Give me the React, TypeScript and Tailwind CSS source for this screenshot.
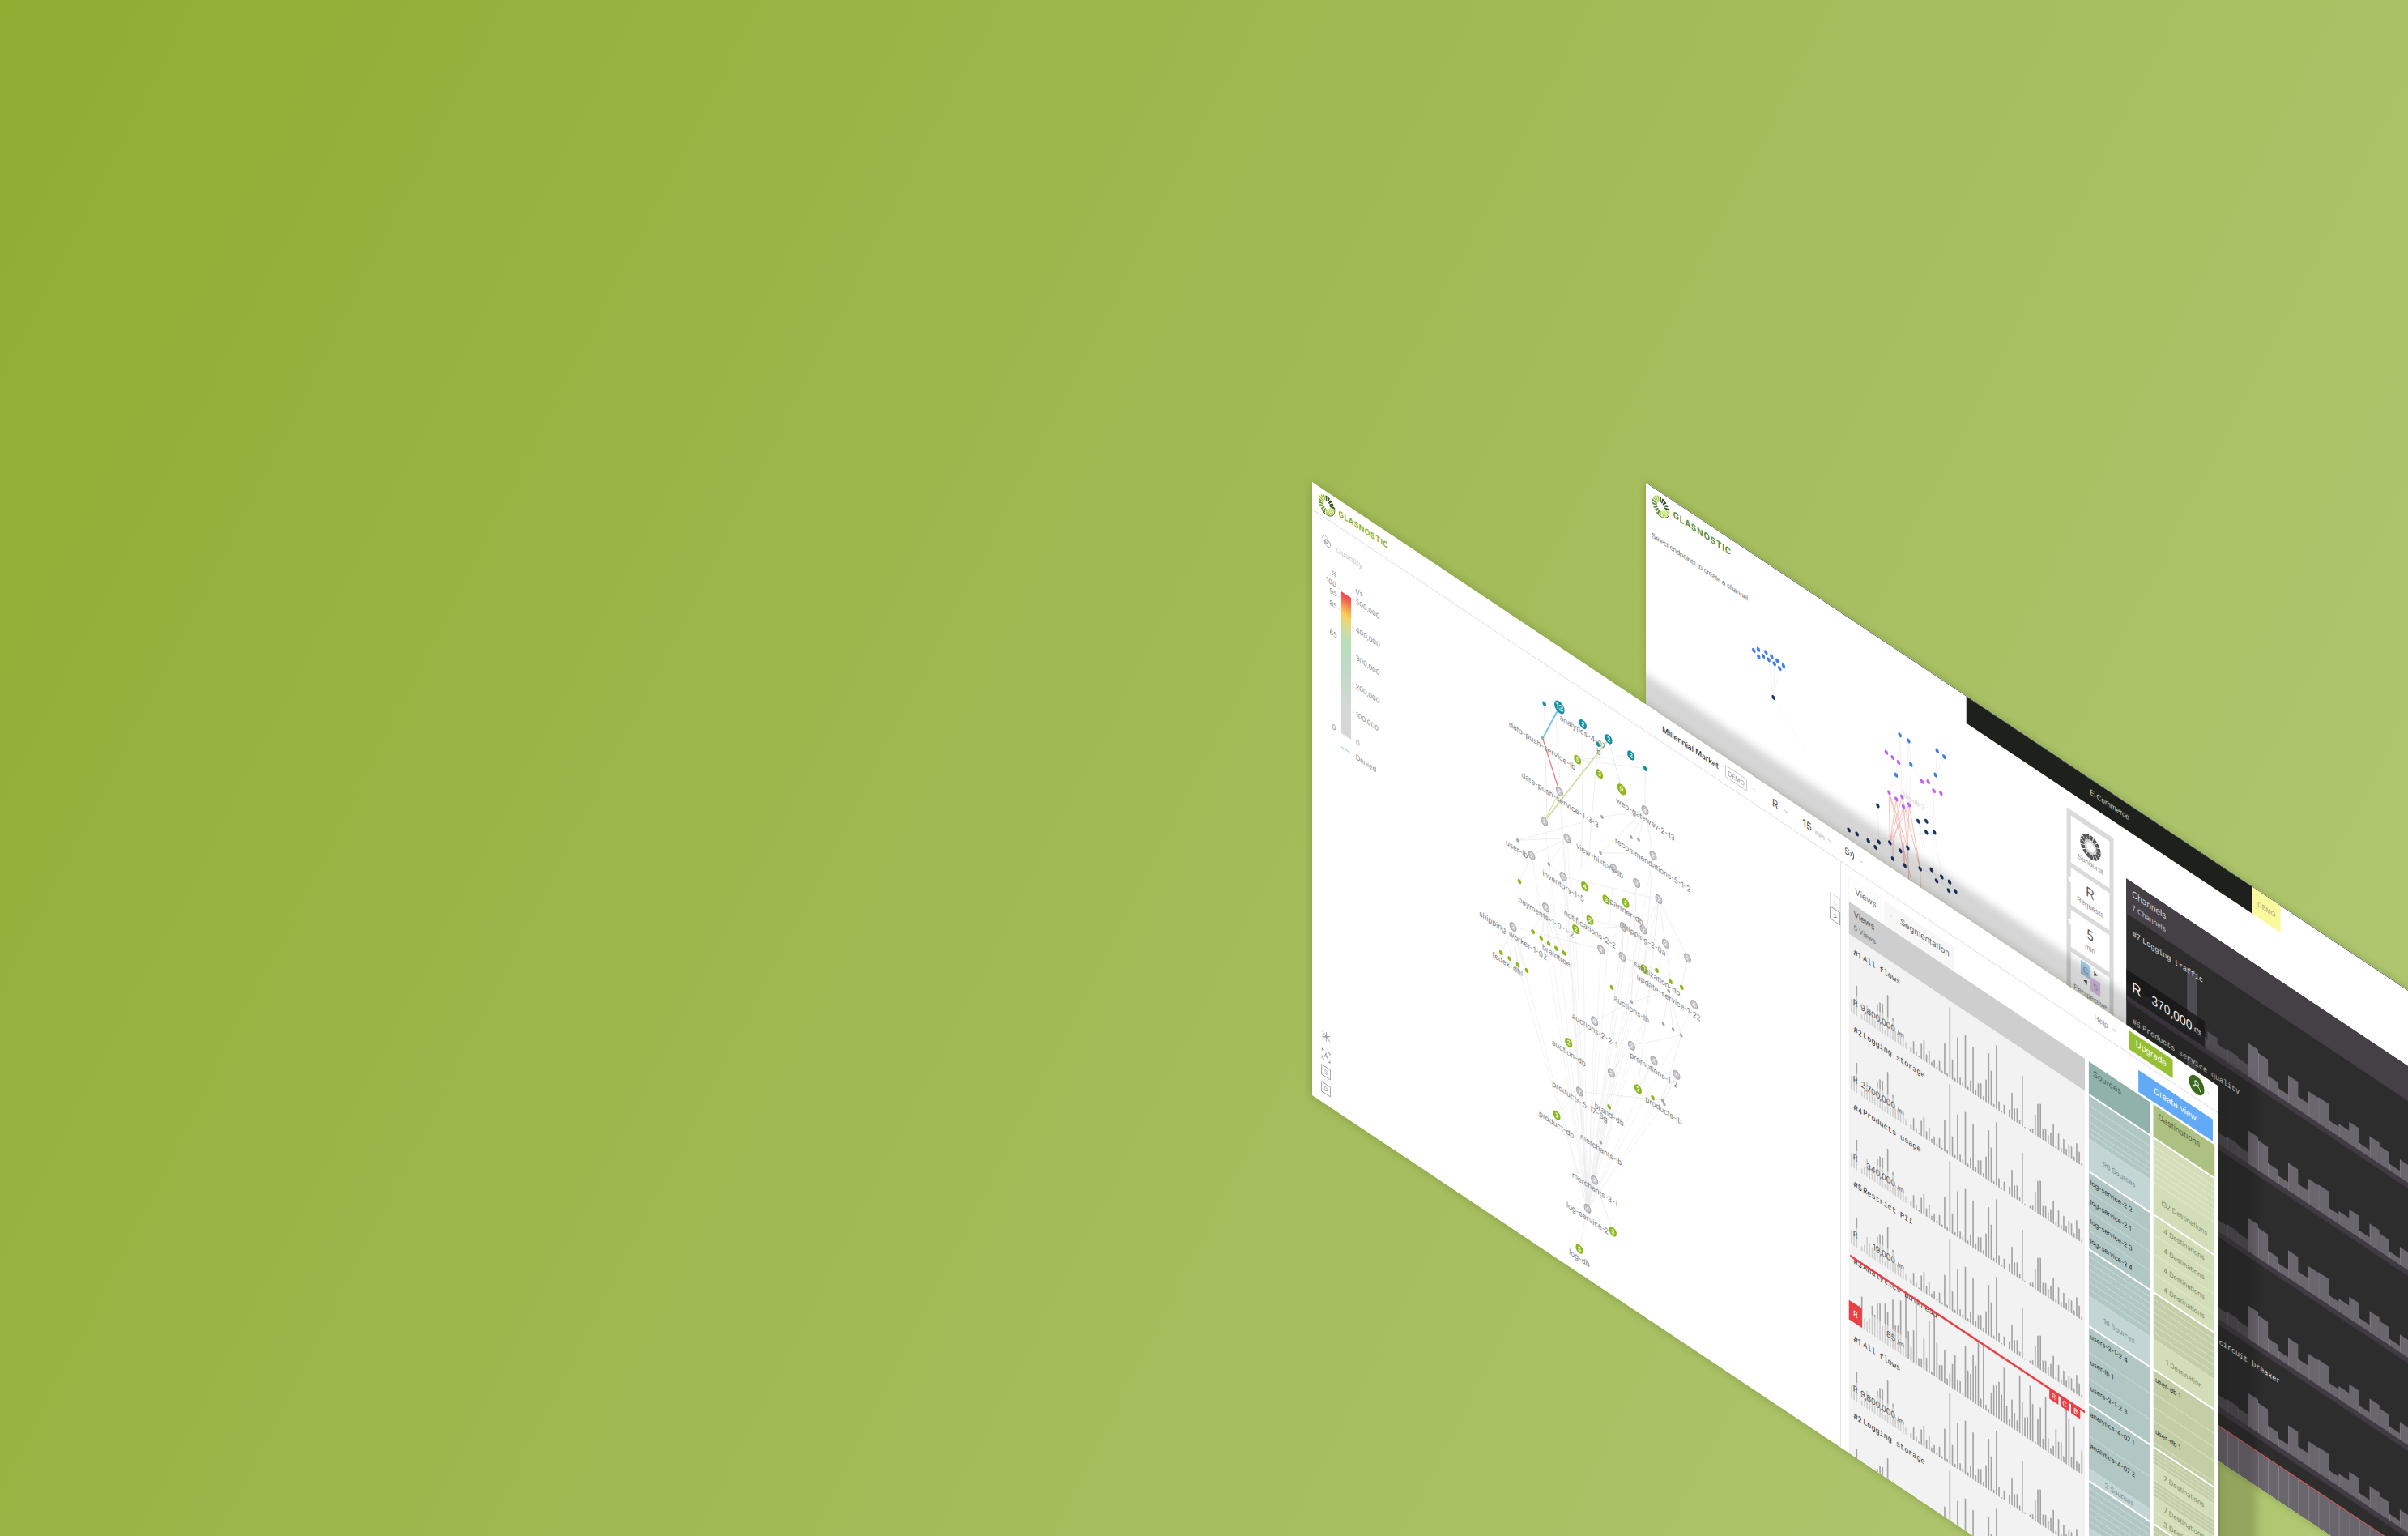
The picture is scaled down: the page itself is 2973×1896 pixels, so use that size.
import React from "react";

const SANS = "font-['Inter',sans-serif]";
const HELV = "font-['Liberation_Sans',sans-serif]";
const MONO = "font-['Liberation_Mono',monospace]";

const SX = 0.866;
const K = 0.6662;

/* Node positions are stored on the isometric drawing grid and projected onto the flat panel. */
const flat = (dx: number, dy: number): [number, number] => [dx / SX, dy - K * dx];
const front = (x: number, y: number) => flat(x / 3 + 180, y / 3 + 245);
const back = (x: number, y: number) => flat(x / 3 - 12, y / 3 + 205);

function Logo({ size, dark = false }: { size: number; dark?: boolean }) {
  const greens = dark
    ? ["#2f4a22", "#9cc53c", "#5f8f3a", "#b9dd55"]
    : ["#34501c", "#9cc832", "#6f9d2c", "#b5da45"];
  return (
    <svg width={size} height={size} viewBox="-12 -12 24 24" className="shrink-0">
      {Array.from({ length: 18 }, (_, i) => (
        <path
          key={i}
          d="M-0.7,-4.8 L-1.5,-10.6 L0.9,-11.2 L0.4,-4.6 Z"
          fill={greens[(i * 3 + (i % 5)) % 4]}
          transform={`rotate(${i * 20})`}
        />
      ))}
      <path d="M11,-3 A11.3,11.3 0 0 1 -6,9.6" fill="none" stroke={greens[0]} strokeWidth="0.8" />
    </svg>
  );
}

function Chevron() {
  return (
    <svg width="6" height="4" viewBox="0 0 6 4" className="shrink-0">
      <path d="M0.5,0.8 L3,3 L5.5,0.8" fill="none" stroke="#b5b5b5" strokeWidth="0.7" />
    </svg>
  );
}

/* ---------- service graph ---------- */

const TEAL = "#14919f";
const LIME = "#8cb81c";
const GRAY = "#a6a6aa";

const numbered: [number, number, string, string, number][] = [
  [376, 99, "13", TEAL, 7.3], [463, 162, "2", TEAL, 5.3], [558, 217, "2", TEAL, 5.3], [641, 277, "2", TEAL, 5.3],
  [443, 293, "5", LIME, 5.2], [524, 346, "3", LIME, 5.2], [606, 403, "9", LIME, 6.2], [470, 762, "4", LIME, 5.3],
  [549, 811, "3", LIME, 5.2], [621, 824, "2", LIME, 5.2], [489, 887, "2", LIME, 5.2], [437, 921, "2", LIME, 5.2],
  [690, 1069, "3", LIME, 5.2], [410, 1341, "2", LIME, 5.3], [667, 1513, "2", LIME, 5.3], [366, 1610, "3", LIME, 5.3],
  [574, 2041, "3", LIME, 5.3], [450, 2105, "5", LIME, 5.3],
];
const ringed: [number, number, string][] = [
  [376, 411, "2"], [320, 521, "2"], [405, 584, "2"], [273, 648, "2"], [693, 480, "4"], [723, 648, "2"],
  [390, 726, "2"], [578, 695, "2"], [662, 750, "3"], [744, 810, "2"], [326, 840, "2"], [204, 912, "2"],
  [613, 912, "5"], [687, 922, "2"], [769, 974, "2"], [530, 996, "2"], [609, 1023, "3"], [850, 1027, "2"],
  [875, 1200, "6"], [506, 1261, "6"], [643, 1352, "2"], [726, 1407, "4"], [810, 1460, "4"], [568, 1453, "2"],
  [451, 1522, "7"], [506, 1850, "2"], [480, 1955, "4"],
];
const smallGray: [number, number][] = [
  [314, 214], [534, 505], [222, 592], [642, 580], [669, 589], [528, 638], [337, 680], [781, 1150], [643, 1190],
  [761, 1272], [797, 1292], [827, 1314], [758, 1555], [764, 1568], [529, 1710],
];
const smallLime: [number, number][] = [
  [228, 744], [278, 930], [308, 953], [336, 974], [364, 992], [393, 1009], [160, 1008], [191, 1030], [222, 1053],
  [255, 1074], [737, 1073], [788, 1115], [829, 1136], [570, 1137], [722, 1545], [560, 1579],
];
const smallTeal: [number, number][] = [[320, 86], [519, 236], [694, 326]];
const names: [number, number, string][] = [
  [462, 192, "analytics-4-07"], [519, 263, "lb"], [312, 242, "data-push-service-lb"],
  [378, 443, "data-push-service-1-3-3"], [694, 514, "web-gateway-2-13"], [722, 684, "recommendations-5-1-2"],
  [218, 625, "user-lb"], [525, 668, "view-history-lb"], [390, 762, "inventory-1-5"], [326, 877, "payments-1-0-1-2"],
  [489, 922, "notifications-2-2"], [624, 857, "partner-db"], [204, 945, "shipping-worker-1-02"],
  [687, 958, "shipping-2-0a"], [160, 1035, "fedex"], [222, 1075, "dhl"], [364, 1020, "braintree"],
  [737, 1103, "sanitization-db"], [781, 1175, "update-service-1-22"], [643, 1218, "auctions-lb"],
  [507, 1297, "auctions-2-2-1"], [410, 1380, "auction-db"], [725, 1443, "promotions-1-2"],
  [451, 1560, "products-5-17-8g"], [560, 1607, "brand-db"], [762, 1593, "products-lb"], [365, 1645, "product-db"],
  [530, 1738, "merchants-lb"], [507, 1885, "merchants-3-1"], [480, 1992, "log-service-2"], [450, 2140, "log-db"],
];
const edges: [number, number, number, number][] = [
  [693, 480, 534, 505], [693, 480, 642, 580], [693, 480, 669, 589], [693, 480, 723, 648], [693, 480, 528, 638],
  [405, 584, 222, 592], [405, 584, 273, 648], [405, 584, 337, 680], [534, 505, 222, 592], [273, 648, 228, 744],
  [337, 680, 390, 726], [390, 726, 744, 810], [443, 293, 641, 277], [443, 293, 694, 326], [694, 326, 693, 480],
  [326, 840, 278, 930], [326, 840, 308, 953], [326, 840, 336, 974], [326, 840, 364, 992], [326, 840, 393, 1009],
  [204, 912, 160, 1008], [204, 912, 191, 1030], [204, 912, 222, 1053], [204, 912, 255, 1074], [204, 912, 530, 996],
  [489, 887, 613, 912], [437, 921, 613, 912], [613, 912, 530, 996], [613, 912, 609, 1023], [744, 810, 687, 922],
  [744, 810, 769, 974], [744, 810, 850, 1027], [850, 1027, 829, 1136], [769, 974, 788, 1115], [609, 1023, 690, 1069],
  [609, 1023, 737, 1073], [643, 1190, 781, 1150], [643, 1190, 506, 1261], [506, 1261, 410, 1341],
  [827, 1314, 643, 1352], [781, 1150, 761, 1272], [781, 1150, 797, 1292], [781, 1150, 827, 1314],
  [827, 1314, 758, 1555], [451, 1522, 758, 1555], [451, 1522, 366, 1610], [643, 1352, 568, 1453],
  [662, 750, 643, 1190], [528, 638, 578, 695], [528, 638, 662, 640], [463, 162, 458, 700], [519, 236, 480, 700],
  [506, 1850, 574, 2041], [480, 1955, 450, 2105], [726, 1407, 667, 1513], [810, 1460, 764, 1555],
  [723, 648, 690, 1069], [744, 810, 667, 1513], [529, 1710, 506, 1850], [320, 86, 330, 520],
];
const toLog: [number, number][] = [
  [320, 521], [376, 411], [390, 726], [326, 840], [204, 912], [273, 648], [405, 584], [530, 996], [609, 1023],
  [613, 912], [643, 1190], [578, 695], [723, 648], [744, 810], [769, 974], [687, 922], [568, 1453], [643, 1352],
  [726, 1407], [810, 1460], [764, 1568], [875, 1200], [506, 1261], [451, 1522], [662, 750], [436, 921], [360, 99],
  [460, 740], [222, 1053],
];

function Edge({ e, color, w = 0.6 }: { e: [number, number, number, number]; color: string; w?: number }) {
  const [x1, y1] = front(e[0], e[1]);
  const [x2, y2] = front(e[2], e[3]);
  return <line x1={x1} y1={y1} x2={x2} y2={y2} stroke={color} strokeWidth={w} />;
}

function ServiceGraph() {
  const small = (list: [number, number][], color: string, r: number) =>
    list.map(([x, y], i) => {
      const [u, v] = front(x, y);
      return <circle key={color + i} cx={u} cy={v} r={r} fill={color} />;
    });
  const left: [string, number, number][] = [
    ["%", 31, 95], ["100", 27, 108], ["95", 30, 119], ["85", 30, 134], ["65", 30, 170], ["0", 31, 285],
  ];
  return (
    <svg width="753" height="723" viewBox="0 34 753 723" className={SANS}>
      <defs>
        <linearGradient id="scale" x1="0" y1="0" x2="0" y2="1">
          <stop offset="0" stopColor="#f2444a" />
          <stop offset="0.04" stopColor="#f4605a" />
          <stop offset="0.09" stopColor="#f79a50" />
          <stop offset="0.15" stopColor="#fbd05a" />
          <stop offset="0.22" stopColor="#d9dc8c" />
          <stop offset="0.32" stopColor="#b9dfba" />
          <stop offset="0.5" stopColor="#bddac4" />
          <stop offset="0.78" stopColor="#d2d8d4" />
          <stop offset="1" stopColor="#d6d6d6" />
        </linearGradient>
      </defs>

      <g stroke="#888" strokeWidth="0.8" fill="none">
        <circle cx="19" cy="60" r="4.2" strokeDasharray="2 1.1" />
        <circle cx="22" cy="63" r="4.2" strokeDasharray="2 1.1" />
        <circle cx="20.5" cy="61.5" r="1.8" />
      </g>
      <text x="34.5" y="66" fontSize="9.3" fill="#c4c4c4">Quantity</text>

      <rect x="41.5" y="111" width="14" height="175" fill="url(#scale)" />
      {left.map(([t, u, v]) => (
        <text key={t + v} x={u} y={v + 3} textAnchor="middle" fontSize="8.6" fill="#8a8a8a">{t}</text>
      ))}
      {[108, 119, 134, 170, 285].map((v) => (
        <line key={v} x1="37" x2="40" y1={v + 1} y2={v + 1} stroke="#ccc" strokeWidth="0.6" />
      ))}
      <text x="67" y="100.5" textAnchor="middle" fontSize="8.6" fill="#8a8a8a">r/s</text>
      {["500,000", "400,000", "300,000", "200,000", "100,000"].map((t, i) => (
        <g key={t}>
          <text x="62" y={114 + i * 34.8} fontSize="8.6" fill="#8a8a8a">{t}</text>
          <line x1="57" x2="60" y1={111 + i * 34.8} y2={111 + i * 34.8} stroke="#ccc" strokeWidth="0.6" />
        </g>
      ))}
      <text x="62.5" y="287.5" fontSize="8.6" fill="#8a8a8a">0</text>
      <line x1="41.5" x2="55.5" y1="303" y2="303" stroke="#86d3f2" strokeWidth="1.2" />
      <text x="62" y="306" fontSize="8.8" fill="#8a8a8a">Denied</text>

      {toLog.map(([x, y], i) => <Edge key={i} e={[x, y, 480, 1955]} color="#ececec" />)}
      {edges.map((e, i) => <Edge key={i} e={e} color="#e8e8e8" w={0.7} />)}
      <Edge e={[376, 99, 314, 214]} color="#6cbcf2" w={1.6} />
      <Edge e={[314, 214, 376, 411]} color="#ee6a70" w={1.6} />
      <Edge e={[558, 217, 330, 510]} color="#cfdc9a" w={1.4} />
      <Edge e={[376, 411, 320, 521]} color="#d6e2a8" w={1} />
      <Edge e={[558, 217, 606, 403]} color="#cde6df" w={0.9} />

      {small(smallGray, GRAY, 2.1)}
      {small(smallLime, LIME, 2.7)}
      {small(smallTeal, TEAL, 2.7)}
      {ringed.map(([x, y, t], i) => {
        const [u, v] = front(x, y);
        return (
          <g key={i}>
            <circle cx={u} cy={v} r="4.7" fill="#b9b9bc" stroke={GRAY} strokeWidth="1" />
            <circle cx={u} cy={v} r="3.4" fill="none" stroke="#dcdcde" strokeWidth="0.6" />
            <text x={u} y={v + 2.4} textAnchor="middle" fontSize="6.5" fontWeight="600" fill="#fff">{t}</text>
          </g>
        );
      })}
      {numbered.map(([x, y, t, c, r], i) => {
        const [u, v] = front(x, y);
        return (
          <g key={i}>
            <circle cx={u} cy={v} r={r} fill={c} />
            <text x={u} y={v + r * 0.5} textAnchor="middle" fontSize={r * 1.4} fontWeight="600" fill="#fff">{t}</text>
          </g>
        );
      })}
      {names.map(([x, y, t]) => {
        const [u, v] = front(x, y);
        return (
          <text key={t} x={u} y={v + 3} textAnchor="middle" fontSize="9.4" fill="#7c7c7c">{t}</text>
        );
      })}

      <g stroke="#8c8c8c" strokeWidth="0.9" fill="none">
        <path d="M20,667.5 V679 M14.5,670 L25.5,676.5 M14.5,676.5 L25.5,670" />
        <path d="M14,694 V691 H17 M22.5,691 H25.5 V694 M25.5,699.5 V702.5 H22.5 M17,702.5 H14 V699.5 M17.5,699.5 L19.8,693.5 L22,699.5 M18.2,697.6 H21.3" />
        <rect x="13.5" y="711" width="12.3" height="12" />
        <rect x="13.5" y="732" width="12.3" height="12" />
      </g>
      <text x="19.6" y="719.8" textAnchor="middle" fontSize="7.5" fill="#8c8c8c">S</text>
      <text x="19.6" y="740.8" textAnchor="middle" fontSize="7.5" fill="#8c8c8c">D</text>
    </svg>
  );
}

/* ---------- view list ---------- */

const flowBars = [
  51, 55, 113, 0, 18, 30, 66, 50, 40, 30, 92, 108, 110, 20, 155, 30, 82, 40, 38, 45, 35, 25, 0, 17, 48, 18, 6, 57, 77,
  31, 52, 16, 31, 10, 38, 9, 117, 12, 262, 76, 13, 170, 28, 15, 198, 13, 42, 174, 22, 52, 58, 16, 84, 189, 130, 13, 236,
  36, 5, 36, 0, 30, 99, 48, 54, 18, 189, 5, 0, 10, 18, 77, 122, 129, 42, 48, 33, 49, 85, 12, 64, 17, 56, 26, 49, 47, 17,
  72, 47, 11,
];
const bulkBars = [
  70, 72, 75, 78, 117, 43, 37, 56, 108, 82, 133, 137, 60, 149, 124, 70, 183, 93, 99, 199, 50, 238, 105, 51, 120, 244, 30,
  35, 115, 50, 196, 12, 229, 130, 55, 61, 123, 24, 49, 91, 132, 46, 47, 9, 190, 105, 98, 177, 143, 239, 33, 240, 23, 15,
  81, 114, 121, 140, 99, 205, 70, 28, 106, 64, 42, 214, 125, 72, 81, 202, 141, 10, 99, 147, 38, 198, 54, 23, 37, 105, 65,
  71, 24, 209, 177, 41, 160, 39, 36, 89,
];

const views = [
  { n: "#1", name: "All flows", rate: "9,800,000" },
  { n: "#2", name: "Logging storage", rate: "2,700,000" },
  { n: "#4", name: "Products usage", rate: "340,000" },
  { n: "#5", name: "Restrict PII", rate: "19,000" },
  { n: "#3", name: "Analytics bulkhead", rate: "85", alert: true },
  { n: "#1", name: "All flows", rate: "9,800,000" },
  { n: "#2", name: "Logging storage", rate: "2,700,000" },
];

function ViewRow({ v }: { v: (typeof views)[number] }) {
  const bars = v.alert ? bulkBars : flowBars;
  return (
    <div className="relative h-[95.4px] shrink-0 bg-[#f2f2f2]">
      <svg width="337" height="95.4" className="absolute inset-0 overflow-visible">
        {bars.map((h, i) => (
          <rect key={i} x={3 + i * 3.69} y={95.4 - h / 3} width="1.9" height={h / 3} fill="#a3a3a3" />
        ))}
      </svg>
      <div className="absolute bottom-0 left-0 h-6 w-[84px] bg-[#f2f2f2]/55" />
      <div className={`relative flex h-[39px] items-center pl-[7px] text-[#333] ${MONO}`}>
        <span className={`w-[13.5px] text-[9.5px] ${SANS}`}>{v.n}</span>
        <span className="text-[9.8px]">{v.name}</span>
      </div>
      <div className={`absolute bottom-[2px] left-[6px] flex h-6 w-[73px] items-center justify-between text-[#555] ${SANS}`}>
        <span className="text-[10.5px]">{v.alert ? "" : "R"}</span>
        <span className="flex items-baseline gap-[3px]">
          <span className="text-[10.5px] tracking-[-0.2px]">{v.rate}</span>
          <span className="text-[8px]">/m</span>
        </span>
      </div>
      {v.alert && (
        <>
          <div className={`absolute bottom-0 left-0 flex h-6 w-[19px] items-center justify-center bg-[#ea4045] text-[10px] text-white ${SANS}`}>R</div>
          <div className="absolute left-[2px] right-0 top-[14px] h-[2.6px] bg-[#ea4045]" />
          <div className={`absolute right-[7px] top-[15px] flex gap-[3px] text-[9px] text-white ${SANS}`}>
            {["R", "C", "B"].map((c) => (
              <span key={c} className="flex h-[13px] w-[12.7px] items-center justify-center bg-[#ea4045]">{c}</span>
            ))}
          </div>
        </>
      )}
    </div>
  );
}

/* ---------- sources / destinations ---------- */

type Cell = { h: number; lite?: boolean; name?: string; count?: string };
const stripes = (n: number, h: number, lite = false): Cell[] => Array.from({ length: n }, () => ({ h, lite }));

const sources: Cell[][] = [
  [{ h: 13 }, { h: 10 }, { h: 10 }, { h: 8 }, { h: 6 }, { h: 7 }, { h: 41, lite: true, count: "96 Sources" }],
  ["log-service-2 2", "log-service-2 1", "log-service-2 3", "log-service-2 4"].map((name) => ({ h: 24, name })),
  [...stripes(7, 8.2), { h: 38, lite: true, count: "16 Sources" }],
  [{ h: 32, name: "users-2-1-2 4" }, { h: 32, name: "user-lb 1" }, { h: 32, name: "users-2-1-2 3" }],
  [{ h: 39, name: "analytics-4-07 1" }, { h: 40, name: "analytics-4-07 2" }, { h: 16, lite: true, count: "2 Sources" }],
  [...stripes(7, 8.2), { h: 38, lite: true, count: "96 Sources" }],
  stripes(4, 24),
];
const L = true;
const destinations: Cell[][] = [
  [{ h: 10, lite: L }, ...stripes(6, 7.4, L), { h: 40, lite: L, count: "132 Destinations" }],
  ["4 Destinations", "4 Destinations", "4 Destinations", "4 Destinations"].map((count) => ({ h: 24, lite: L, count })),
  [...stripes(7, 8.2), { h: 38, lite: L, count: "1 Destination" }],
  [{ h: 29, name: "user-db 1" }, { h: 17 }, { h: 17 }, { h: 26, name: "user-db 1" }, { h: 7 }],
  [...stripes(4, 5), { h: 20, lite: L, count: "7 Destinations" }, ...stripes(4, 5), { h: 18, lite: L, count: "7 Destinations" }, { h: 18, lite: L, count: "3 Destinations" }],
  stripes(12, 8.2),
];

function CellColumn({ groups, green = false }: { groups: Cell[][]; green?: boolean }) {
  const tone = (lite?: boolean) =>
    green ? (lite ? "bg-[#d3deb9] border-[#e2eacf]" : "bg-[#c3cea7] border-[#dbe4c4]") : lite ? "bg-[#c3d6d5] border-[#c3d6d5]" : "bg-[#b0c7c4] border-[#c9dcda]";
  return (
    <>
      {groups.map((g, gi) => (
        <div key={gi} className="flex h-[95.5px] shrink-0 flex-col overflow-hidden border-t-2 border-white">
          {g.map((c, i) => (
            <div
              key={i}
              className={`flex shrink-0 border-b-[1.5px] leading-none ${tone(c.lite)} ${
                c.name
                  ? `items-start pl-[3px] text-[8.2px] text-[#2c2c2c] ${c.h > 28 ? "pt-[6px]" : "pt-[7px]"}`
                  : `items-center justify-center text-[8.6px] ${green ? "text-[#7d8666]" : "text-[#73898a]"}`
              }`}
              style={{ height: c.h }}
            >
              {c.name ?? c.count}
            </div>
          ))}
        </div>
      ))}
    </>
  );
}

function FrontPanel() {
  return (
    <div className={`absolute left-[1620px] top-[595px] flex h-[757px] w-[1291px] origin-top-left flex-col overflow-hidden bg-white [transform:matrix(0.866,0.577,0,1,0,0)] ${SANS}`}>
      <div className="flex h-[34px] shrink-0 items-center border-b border-[#dcdcdc] text-[9.5px] text-[#4a4a4a]">
        <div className="flex w-[499px] shrink-0 items-center gap-[4.5px] pl-2">
          <Logo size={25} />
          <span className="text-[10px] font-bold tracking-[0.55px] text-[#8cb02c]">GLASNOSTIC</span>
        </div>
        <div className="w-[90px] shrink-0 text-[9.9px] font-medium text-[#333]">Millennial Market</div>
        <div className="flex h-[15px] w-[31px] shrink-0 items-center justify-center rounded-[1px] border border-[#c4c4c4] text-[8px] text-[#999]">DEMO</div>
        <div className="flex w-[36px] shrink-0 pl-[8px]"><Chevron /></div>
        <div className="w-[17px] shrink-0 text-[13px]">R</div>
        <div className="w-[26px] shrink-0"><Chevron /></div>
        <div className="w-[18px] shrink-0 text-[13px]">15</div>
        <div className="w-[18px] shrink-0 pt-[2px] text-[8px] text-[#999]">min</div>
        <div className="w-[24px] shrink-0"><Chevron /></div>
        <div className="flex w-[18px] shrink-0 items-center">
          <span className="text-[11.5px]">S</span>
          <svg width="9" height="11" viewBox="0 0 9 11" fill="none" stroke="#4a4a4a" strokeWidth="1">
            <path d="M1.5,3 Q3.4,5.5 1.5,8" />
            <path d="M4.5,1 Q8,5.5 4.5,10" />
          </svg>
        </div>
        <div className="w-[338px] shrink-0 pl-[3px]"><Chevron /></div>
        <div className="w-[26px] shrink-0 text-[9.2px] text-[#888]">Help</div>
        <div className="w-[24px] shrink-0"><Chevron /></div>
        <div className="flex h-[23px] w-[62px] shrink-0 items-center justify-center bg-[#97bf33] text-[10.7px] text-white">Upgrade</div>
        <div className="ml-[23px] flex size-[22px] shrink-0 items-center justify-center rounded-full bg-[#3b6a1f]">
          <svg width="14" height="14" viewBox="0 0 14 14" fill="none" stroke="#fff" strokeWidth="1">
            <circle cx="7" cy="4.5" r="2.7" />
            <path d="M1.8,12.5 C2.4,8.6 4.6,7.3 7,7.3 C9.4,7.3 11.6,8.6 12.2,12.5" />
          </svg>
        </div>
        <div className="pl-[4px]"><Chevron /></div>
      </div>

      <div className="flex min-h-0 flex-1">
        <div className="relative w-[753px] shrink-0">
          <ServiceGraph />
          <div className="absolute right-0 top-[46px] flex flex-col gap-[1px]">
            <div className="flex h-4 w-[15px] items-center justify-center border-[0.8px] border-[#ddd] text-[10px] text-[#bbb]">&lt;</div>
            <div className="flex h-4 w-[15px] items-center justify-center border border-[#999] text-[10px] text-[#888]">&gt;</div>
          </div>
        </div>

        <div className="flex min-w-0 flex-1 flex-col border-l border-[#e2e2e2] pl-[11px] pr-[4.5px] pt-[12px]">
          <div className="flex h-[29.5px] shrink-0 items-start text-[10.7px] text-[#666]">
            <div className="flex h-full w-[46px] items-center border border-b-0 border-[#f4f4f4] pb-[4px] pl-[8px]">Views</div>
            <div className="ml-[4px] flex h-full w-[101px] items-center gap-[12px] bg-[#f7f7f7] pb-[4px] pl-[9px]">
              <span className="size-[2.5px] rounded-full bg-[#ddd]" />
              Segmentation
            </div>
            <div className="ml-auto mr-[3px] flex h-[26.5px] w-[106px] items-center justify-center bg-[#62a9f6] text-[10.8px] text-white">Create view</div>
          </div>
          <div className="flex min-h-0 flex-1 gap-[4.5px]">
            <div className="flex w-[337px] shrink-0 flex-col overflow-hidden">
              <div className="flex h-[40px] shrink-0 flex-col justify-center gap-[6px] bg-[#cecece] pl-[7px] leading-none">
                <span className="text-[10.5px] text-[#555]">Views</span>
                <span className="text-[8.5px] text-[#666]">5 Views</span>
              </div>
              {views.map((v, i) => <ViewRow key={i} v={v} />)}
            </div>
            <div className="flex w-[88px] shrink-0 flex-col overflow-hidden">
              <div className="h-[40px] shrink-0 bg-[#90b2ab] pl-[7px] pt-[5px] text-[10.3px] leading-[13px] text-[#44605b]">Sources</div>
              <CellColumn groups={sources} />
            </div>
            <div className="flex w-[88px] shrink-0 flex-col overflow-hidden">
              <div className="h-[40px] shrink-0 bg-[#adc183] pl-[7px] pt-[5px] text-[10.3px] leading-[13px] text-[#566238]">Destinations</div>
              <CellColumn groups={destinations} green />
            </div>
          </div>
        </div>
      </div>
    </div>
  );
}

/* ---------- back panel ---------- */

const BLUE = "#3f7ef0";
const NAVY = "#1d3567";
const PURPLE = "#c264f2";
const dots: [string, [number, number][]][] = [
  [BLUE, [[436, 9], [453, 5], [481, 16], [502, 31], [523, 47], [546, 66], [454, 32], [471, 30], [491, 43], [512, 58], [532, 75], [977, 321], [1009, 343], [1115, 380], [1141, 402], [1018, 431], [963, 470], [1109, 470]]],
  [PURPLE, [[927, 386], [950, 405], [972, 423], [1059, 494], [1082, 495], [1103, 528], [1129, 537], [937, 535], [964, 559], [985, 551], [990, 587], [1011, 580]]],
  [NAVY, [[509, 183], [895, 583], [1045, 641], [1075, 641], [1075, 682], [1105, 682], [788, 673], [818, 688], [860, 714], [899, 718], [887, 738], [940, 721], [1006, 739], [979, 750], [951, 780], [995, 805], [1052, 817], [1094, 821], [1132, 847], [1113, 862], [1161, 866], [1158, 898], [1183, 900]]],
];
const redFlows: [number, number, number, number][] = [
  [937, 535, 940, 721], [937, 535, 1006, 739], [964, 559, 940, 721], [964, 559, 995, 805], [985, 551, 940, 721],
  [985, 551, 1052, 817], [990, 587, 1006, 739], [990, 587, 951, 721], [1011, 580, 1006, 739], [1011, 580, 1052, 817],
  [1011, 580, 940, 721], [937, 535, 1030, 900], [1052, 817, 1055, 930], [990, 720, 995, 805], [1006, 739, 1010, 860],
  [951, 721, 951, 780],
];
const faintFlows: [number, number, number, number][] = [
  [491, 43, 509, 183], [512, 58, 509, 183], [532, 75, 509, 183], [977, 321, 963, 470],
  [1009, 343, 1018, 431], [1018, 431, 1011, 580], [977, 321, 985, 551], [1009, 343, 1000, 560], [1115, 380, 1109, 470],
  [1141, 402, 1109, 470], [1018, 431, 1059, 494], [1103, 528, 1100, 820], [895, 583, 899, 718], [860, 714, 1075, 682],
  [899, 718, 1105, 682], [1045, 641, 1070, 740], [1075, 641, 1060, 740], [1105, 682, 1132, 847], [963, 470, 937, 535],
  [1052, 817, 1132, 847], [1094, 821, 1158, 898], [1132, 847, 1183, 900],
];

function EndpointMap() {
  const seg = (e: [number, number, number, number], c: string, i: number, w: number) => {
    const [x1, y1] = back(e[0], e[1]);
    const [x2, y2] = back(e[2], e[3]);
    return <line key={c + i} x1={x1} y1={y1} x2={x2} y2={y2} stroke={c} strokeWidth={w} />;
  };
  const [lu, lv] = back(1028, 575);
  return (
    <svg width="600" height="640" viewBox="0 34 600 640" className="absolute left-0 top-0">
      {seg([509, 183, 640, 400], "#f7f7f7", 0, 0.7)}
      {faintFlows.map((e, i) => seg(e, "#f0f0f0", i, 0.8))}
      {redFlows.map((e, i) => seg(e, "#f8b4ac", i, 0.8))}
      <text x={lu} y={lv} textAnchor="middle" fontSize="8.5" fill="#cfcfcf" className={HELV}>log-db-3</text>
      {dots.map(([c, list]) =>
        list.map(([x, y], i) => {
          const [u, v] = back(x, y);
          return <circle key={c + i} cx={u} cy={v} r="2.6" fill={c} />;
        }),
      )}
    </svg>
  );
}

function Tool({ h, children, label, notch = false }: { h: string; children: React.ReactNode; label: string; notch?: boolean }) {
  return (
    <div className={`relative flex w-[55px] shrink-0 flex-col items-center justify-center bg-white ${h}`}>
      {notch && <span className="absolute -left-[3px] top-[12px] size-[6px] rotate-45 bg-white" />}
      {children}
      <span className="text-[9px] leading-[11px] text-[#888]">{label}</span>
    </div>
  );
}

const trafficBars = [12, 9, 11, 8, 10, 7, 80, 9, 18, 10, 12, 10, 37, 33, 13, 6, 30, 12, 27, 28, 8, 12, 23, 5, 22, 18, 4, 18, 16];
const channels = [
  { n: "#7", name: "Logging traffic" },
  { n: "#6", name: "Products service quality" },
  { n: "#5", name: "Restrict PII" },
  { n: "#4", name: "Products usage" },
  { n: "#2", name: "Checkout gateway to circuit breaker", clip: true },
];

function TrafficBars() {
  return (
    <div className="absolute inset-x-0 bottom-0 flex items-end">
      {trafficBars.map((h, i) => (
        <div
          key={i}
          className="w-[14.45px] shrink-0 border-l border-[#807b85] bg-[#6a666d]"
          style={{ height: h + 4, opacity: i < 12 ? 0.55 : 1 }}
        />
      ))}
    </div>
  );
}

function BackPanel() {
  return (
    <div className={`absolute left-[2032px] top-[595px] flex h-[737px] w-[1291px] origin-top-left flex-col overflow-hidden bg-white shadow-[0_0_8px_rgba(40,60,0,0.25)] [transform:matrix(0.866,0.577,0,1,0,0)] ${HELV}`}>
      <div className="flex h-[34px] shrink-0 border-t border-[#4a5240]">
        <div className={`flex w-[457px] shrink-0 items-center gap-[5px] pl-2 ${SANS}`}>
          <Logo size={26} dark />
          <span className="text-[11.2px] font-bold tracking-[0.95px] text-[#5c8c3c]">GLASNOSTIC</span>
        </div>
        <div className="flex w-[408px] shrink-0 items-center justify-center bg-[#1e211b] text-[9.5px] text-[#d0d0cc]">E-Commerce</div>
        <div className="flex w-[40px] shrink-0 items-center justify-center bg-[#fbf99d] text-[8.5px] text-[#a8a67a]">DEMO</div>
      </div>
      <div className="relative flex min-h-0 flex-1">
        <EndpointMap />
        <div className="w-[600px] shrink-0 pl-[8.5px] pt-[20px] text-[8.7px] leading-[13px] tracking-[-0.1px] text-[#6c6c6c]">Select endpoints to create a channel</div>
        <div className="mt-[20.5px] flex w-[67px] shrink-0 flex-col items-center gap-[6px] bg-[#dadada] pt-[7px]">
          <Tool h="h-[58px]" label="Sunburst">
            <svg width="32" height="32" viewBox="-16 -16 32 32">
              <circle r="11.6" fill="none" stroke="#565656" strokeWidth="6" strokeDasharray="4 0.86" />
              <circle r="7" fill="none" stroke="#c0c0c0" strokeWidth="3" strokeDasharray="2.2 0.6" />
            </svg>
          </Tool>
          <Tool h="h-[46px]" label="Requests" notch>
            <span className="text-[17px] leading-[22px] text-[#555]">R</span>
          </Tool>
          <Tool h="h-[46px]" label="min" notch>
            <span className="text-[17px] leading-[22px] text-[#555]">5</span>
          </Tool>
          <Tool h="h-[47px]" label="Perspective">
            <svg width="32" height="34" viewBox="0 0 32 34">
              <rect x="2" y="1" width="14" height="17" fill="#a9cde8" />
              <rect x="16" y="14" width="14" height="17" fill="#dcc6ea" />
              <path d="M21,4 l5,3 l-5,3 z M11,21 l-5,3 l5,3 z" fill="#555" />
              <text x="9" y="13.5" textAnchor="middle" fontSize="10" fill="#6f93ad">C</text>
              <text x="23" y="26.5" textAnchor="middle" fontSize="10" fill="#a58bb8">S</text>
            </svg>
          </Tool>
        </div>
        <div className="ml-[18px] mt-[60px] flex w-[606px] shrink-0 flex-col bg-[#2d2d2d] text-white">
          <div className="flex h-[43px] shrink-0 flex-col gap-[5px] bg-[#453f46] pl-[8px] pt-[9px] leading-none">
            <span className="text-[11.5px] text-[#d8d6da]">Channels</span>
            <span className="text-[9.5px] text-[#c5c3c8]">7 Channels</span>
          </div>
          {channels.map((c, i) => (
            <div key={c.n} className="relative h-[108px] shrink-0 border-b-[7px] border-[#403b42]">
              <TrafficBars />
              {i === 0 && <div className="absolute bottom-0 left-0 h-[32px] w-[112px] bg-[#141414]/75" />}
              <div className={`relative flex items-baseline gap-[3px] whitespace-nowrap pl-[9px] pt-[13px] leading-[14px] text-[#e2e2e2] ${MONO}`}>
                <span className={`text-[10px] ${HELV}`}>{c.n}</span>
                <span className={c.clip ? "ml-[-7px] text-[9.7px]" : "text-[9.6px]"}>{c.name}</span>
              </div>
              {i === 0 && (
                <div className="absolute bottom-[3px] left-[8px] flex h-[24px] items-center text-[#f0f0f0]">
                  <span className="w-[28px] text-[18px]">R</span>
                  <span className="text-[16px]">370,000</span>
                  <span className="pl-[3px] pt-[3px] text-[9.5px]">r/s</span>
                </div>
              )}
            </div>
          ))}
          <div className={`relative flex min-h-0 flex-1 flex-col pt-[16px] ${MONO}`}>
            <div className="h-[2px] shrink-0 bg-[#c0626a]" />
            <div className="flex flex-1 bg-[#6a666d]">
              {trafficBars.map((_, i) => (
                <span key={i} className="w-[14.45px] shrink-0 border-l border-[#88838c]" />
              ))}
            </div>
            <span className="absolute left-[23px] top-[12px] text-[9.8px] leading-[14px] text-[#cfcfcf]">Analytics bulkhead</span>
          </div>
        </div>
      </div>
    </div>
  );
}

export default function App() {
  return (
    <div className="relative h-[1896px] w-[2973px] overflow-hidden bg-[linear-gradient(117deg,#8fad31_0%,#98b342_22%,#a3bb58_52%,#adc46b_85%,#b2c873_100%)]">
      <BackPanel />
      <div className="absolute left-[2032px] top-[789px] h-[825px] w-[900px] origin-top-left overflow-hidden [transform:matrix(0.866,0.577,0,1,0,0)]">
        <div className="-ml-[40px] mt-[43px] h-[1200px] w-[911px] bg-black/[0.165] blur-[6px]" />
      </div>
      <div className="absolute left-[1620px] top-[595px] h-[757px] w-[1291px] origin-top-left shadow-[0_0_10px_rgba(40,60,0,0.28)] [transform:matrix(0.866,0.577,0,1,0,0)]" />
      <FrontPanel />
    </div>
  );
}
